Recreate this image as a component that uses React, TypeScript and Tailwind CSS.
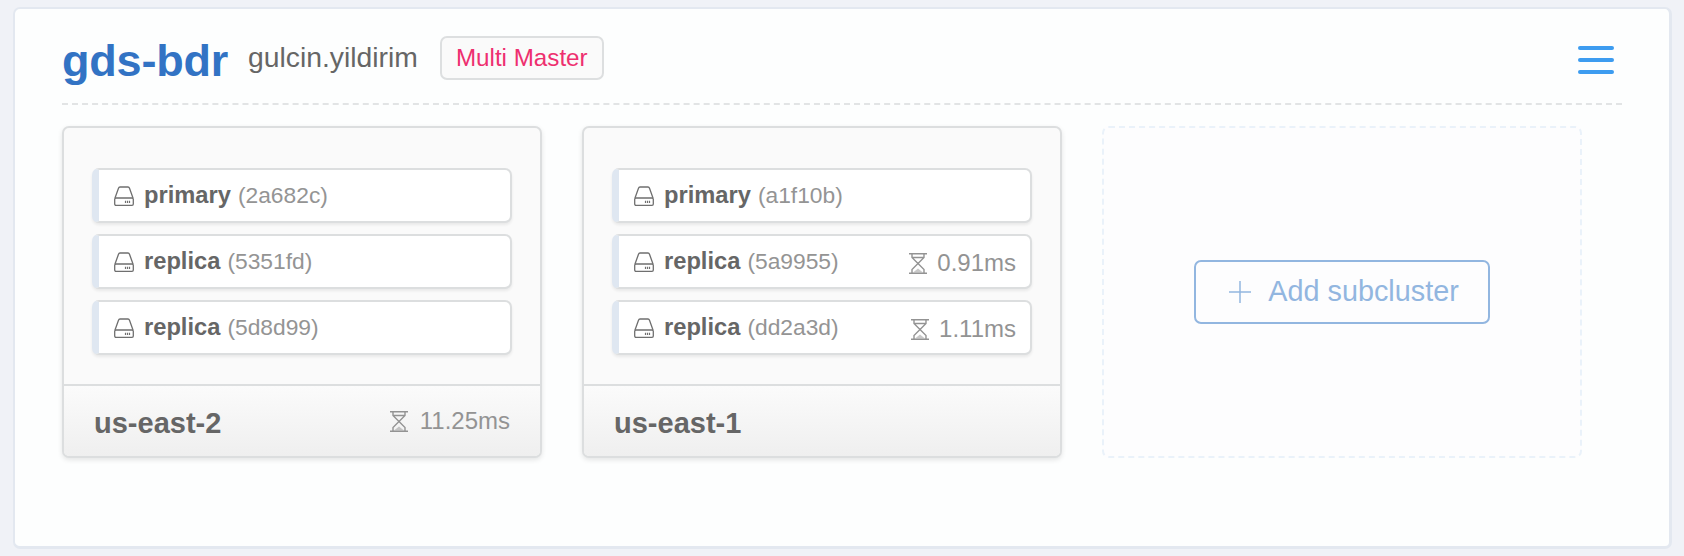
const sans = 'font-["Liberation_Sans",Arial,sans-serif]';

function DriveIcon() {
  return (
    <svg viewBox="0 0 20 20" className="h-[20px] w-[20px] shrink-0" fill="none" aria-hidden>
      <path
        d="M1 12 4.500 2.200Q4.900 1 6 1h8q1.100 0 1.500 1.200L19 12"
        stroke="#6f6f6f"
        strokeWidth="1.300"
        strokeLinejoin="round"
      />
      <rect x="0.700" y="12" width="18.600" height="7.300" rx="1.300" stroke="#6f6f6f" strokeWidth="1.300" />
      <path d="M11.500 14.700v2.200M13.500 14.700v2.200M15.500 14.700v2.200" stroke="#6f6f6f" strokeWidth="1.200" />
    </svg>
  );
}

function Hourglass() {
  return (
    <svg viewBox="0 0 18 21" className="h-[21px] w-[18px] shrink-0" fill="none" aria-hidden>
      <path
        d="M0 .8h18M0 20.200h18M3 .8v3.700l6 6 6-6V.8M3 20.200v-3.700l6-6 6 6v3.700M3 4.500h12"
        stroke="#939393"
        strokeWidth="1.400"
      />
      <path d="M4 19.500 9 15.500l5 4Z" fill="#939393" fillOpacity="0.5" />
    </svg>
  );
}

function Lag({ value, gap }: { value: string; gap: string }) {
  return (
    <span className={`flex items-center text-[24px] text-[#939393] ${gap}`}>
      <Hourglass />
      {value}
    </span>
  );
}

type Node = { role: string; id: string; lag?: string };

function NodeRow({ role, id, lag }: Node) {
  return (
    <div className="flex h-[55px] items-center rounded-[7px] border-2 border-l-[7px] border-[#dcdedf] border-l-[#dfe7f1] bg-white pr-[14px] pl-[15px] shadow-[0_2px_3px_rgba(0,0,0,0.07)]">
      <DriveIcon />
      <span className="ml-[10px] text-[23.700px] font-bold text-[#666]">{role}</span>
      <span className="ml-[7px] text-[22.800px] text-[#949494]">({id})</span>
      {lag && (
        <span className="mt-[3px] ml-auto">
          <Lag value={lag} gap="gap-[10px]" />
        </span>
      )}
    </div>
  );
}

function Subcluster({ name, lag, nodes }: { name: string; lag?: string; nodes: Node[] }) {
  return (
    <div className="flex h-[332px] w-[480px] shrink-0 flex-col overflow-hidden rounded-[7px] border-2 border-[#dcdedf] bg-[#fafafa] shadow-[0_2px_5px_rgba(0,0,0,0.1)]">
      <div className="flex flex-1 flex-col gap-[11px] px-[28px] pt-[40px]">
        {nodes.map((n) => (
          <NodeRow key={n.id} {...n} />
        ))}
      </div>
      <div className="flex h-[72px] items-center justify-between border-t-2 border-[#dcdedf] bg-gradient-to-b from-[#fbfbfb] to-[#efefef] pr-[30px] pl-[30px]">
        <span className="mt-[6px] text-[29px] font-bold text-[#666]">{name}</span>
        {lag && <Lag value={lag} gap="gap-[12px]" />}
      </div>
    </div>
  );
}

export default function App() {
  return (
    <div className={`${sans} h-[556px] w-[1684px] overflow-hidden bg-[#f0f2f7] pt-[7px] pl-[13px]`}>
      <div className="h-[542px] w-[1659px] rounded-[7px] border-2 border-r-[3px] border-b-[3px] border-[#e3e8f0] bg-[#fdfefe] pr-[47px] pl-[47px]">
        <div className="flex h-[96px] items-center border-b-2 border-dashed border-[#e2e4e5] pt-[2px]">
          <h1 className="mt-[6px] text-[45px] leading-none font-bold tracking-[-0.2px] text-[#3273c4]">gds-bdr</h1>
          <span className="ml-[20px] text-[28.300px] text-[#666]">gulcin.yildirim</span>
          <span className="mt-[2px] ml-[22px] flex h-[44px] items-center rounded-[7px] border-2 border-[#dddfe0] bg-[#fafafa] px-[14px] text-[24.200px] text-[#ee2f6f]">
            Multi Master
          </span>
          <div className="mt-[6px] mr-[8px] ml-auto flex w-[36px] flex-col gap-[8px]">
            <span className="h-[4px] rounded-full bg-[#3d9cf0]" />
            <span className="h-[4px] rounded-full bg-[#3d9cf0]" />
            <span className="h-[4px] rounded-full bg-[#3d9cf0]" />
          </div>
        </div>
        <div className="mt-[21px] flex gap-[40px]">
          <Subcluster
            name="us-east-2"
            lag="11.25ms"
            nodes={[
              { role: 'primary', id: '2a682c' },
              { role: 'replica', id: '5351fd' },
              { role: 'replica', id: '5d8d99' },
            ]}
          />
          <Subcluster
            name="us-east-1"
            nodes={[
              { role: 'primary', id: 'a1f10b' },
              { role: 'replica', id: '5a9955', lag: '0.91ms' },
              { role: 'replica', id: 'dd2a3d', lag: '1.11ms' },
            ]}
          />
          <div className="flex h-[332px] w-[480px] shrink-0 items-center justify-center rounded-[7px] border-2 border-dashed border-[#eaf2fa] bg-[#fdfdfe]">
            <button className="flex h-[64px] w-[296px] items-center justify-center gap-[17px] rounded-[7px] border-2 border-[#92b6e0] pl-[4px] text-[28.800px] text-[#92b6e0]">
              <svg viewBox="0 0 22 22" className="h-[22px] w-[22px]" fill="none" aria-hidden>
                <path d="M11 0v22M0 11h22" stroke="#92b6e0" strokeWidth="1.500" />
              </svg>
              Add subcluster
            </button>
          </div>
        </div>
      </div>
    </div>
  );
}
